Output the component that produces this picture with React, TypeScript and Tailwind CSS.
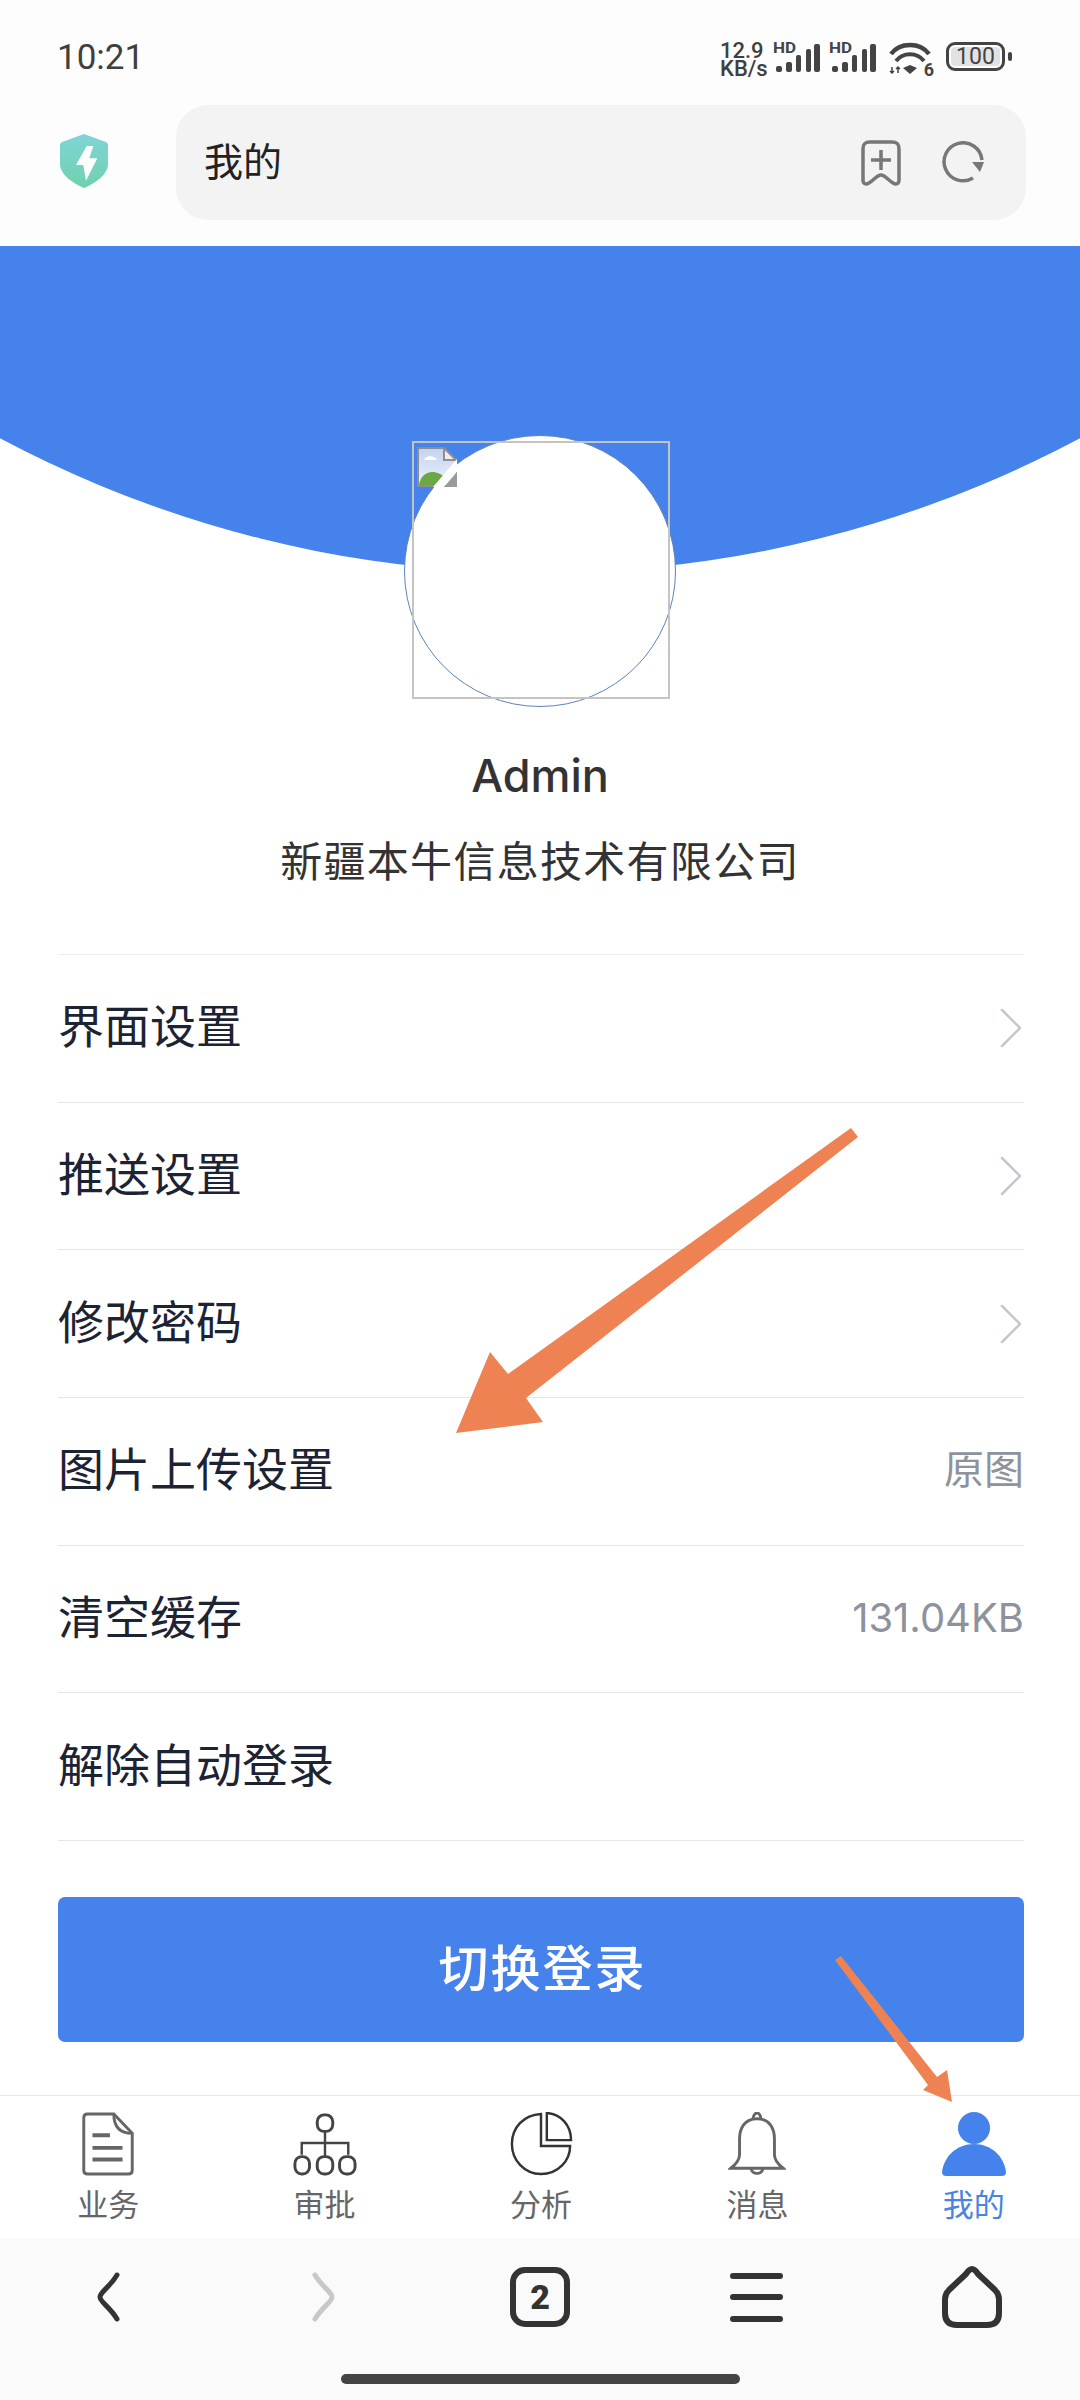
import { ChevronRight } from "lucide-react";

const cjk = "font-['Inter','Noto_Sans_CJK_SC',sans-serif]";

const rows = [
  { label: "界面设置", arrow: true },
  { label: "推送设置", arrow: true },
  { label: "修改密码", arrow: true },
  { label: "图片上传设置", value: "原图" },
  { label: "清空缓存", value: "131.04KB" },
  { label: "解除自动登录" },
];

function Bars() {
  return (
    <div className="relative w-[44px] h-[34px]">
      <span className="absolute left-[-3px] top-[-1px] text-[17px] leading-[14px] font-bold font-['Roboto',sans-serif] text-[#444] scale-y-90 origin-top">
        HD
      </span>
      <svg viewBox="0 0 44 34" className="absolute inset-0 w-[44px] h-[34px]" fill="#444">
        <rect x="0" y="24" width="6" height="6" rx="2" />
        <rect x="10" y="20" width="6" height="10" rx="2" />
        <rect x="20" y="13" width="5" height="17" rx="2" />
        <rect x="30" y="7" width="5" height="23" rx="2" />
        <rect x="38" y="2" width="6" height="28" rx="2" />
      </svg>
    </div>
  );
}

function StatusBar() {
  return (
    <div className="h-[105px] flex items-start justify-between pl-[57px] pr-[75px] pt-[38px] font-['Roboto',sans-serif] text-[#3f3f3f]">
      <span className="text-[35px] leading-[40px]">10:21</span>
      <div className="flex items-start gap-[6px] pt-[4px]">
        <div className="w-[50px] text-[22px] leading-[18px] font-medium">
          12.9
          <br />
          KB/s
        </div>
        <Bars />
        <div className="ml-[6px]">
          <Bars />
        </div>
        <div className="relative w-[44px] h-[34px] ml-[6px]">
          <svg viewBox="0 0 44 34" className="w-[44px] h-[34px]" fill="none" stroke="#444" strokeWidth="4.5">
            <path d="M3 12 C12 0 32 0 41 12" />
            <path d="M8 19 C15 10 29 10 36 19" strokeWidth="4" />
            <path d="M15 26 L22 23 L29 26 L22 32 Z" fill="#444" stroke="none" />
            <path d="M4 25 V31 M2 29 L4 31 L6 29 M10 31 V25 M8 27 L10 25 L12 27" strokeWidth="1.5" />
          </svg>
          <span className="absolute right-[-2px] bottom-[-3px] text-[18px] leading-[18px] font-bold text-[#444]">6</span>
        </div>
        <div className="relative w-[59px] h-[29px] ml-[8px] rounded-[9px] border-[3px] border-[#444] p-[2px]">
          <div className="h-full w-full rounded-[4px] bg-[#e2e2e2] flex items-center justify-center text-[23px] leading-none text-[#444]">
            100
          </div>
          <div className="absolute right-[-10px] top-[7px] w-[4px] h-[9px] rounded-[2px] bg-[#444]" />
        </div>
      </div>
    </div>
  );
}

function AppBar() {
  return (
    <div className="h-[141px] flex items-start pl-[60px] pr-[54px]">
      <svg viewBox="0 0 48 54" className="w-[48px] h-[54px] mt-[29px] shrink-0">
        <defs>
          <linearGradient id="shield" x1="0" y1="0" x2="0" y2="1">
            <stop offset="0" stopColor="#7fd5d6" />
            <stop offset="1" stopColor="#6fd1ae" />
          </linearGradient>
        </defs>
        <path d="M24 0 L46 8 C47 8.5 48 10 48 11 V30 C48 40 36 49 24 54 C12 49 0 40 0 30 V11 C0 10 1 8.5 2 8 Z" fill="url(#shield)" />
        <path d="M26.7 12 L16 31 H23.3 L26 46.7 L37.3 24.3 H29.3 L33.3 12 Z" fill="#fff" />
      </svg>
      <div className="ml-[68px] flex-1 h-[115px] rounded-[32px] bg-[#f3f3f3] flex items-center pl-[28px] pr-[41px]">
        <span className={`${cjk} text-[39px] text-[#222]`}>我的</span>
        <svg viewBox="0 0 40 46" className="ml-auto w-[40px] h-[46px]" fill="none" stroke="#777" strokeWidth="3.5" strokeLinejoin="round">
          <path d="M2 9 C2 4 4 2 9 2 H31 C36 2 38 4 38 9 V40 C38 44 35 45 32 43 C27 40 24 35 20 35 C16 35 13 40 8 43 C5 45 2 44 2 40 Z" />
          <path d="M20 10 V30 M10 20 H30" />
        </svg>
        <svg viewBox="0 0 44 44" className="ml-[40px] w-[44px] h-[44px]" fill="none" stroke="#777" strokeWidth="3.5">
          <path d="M32 37 A19 19 0 1 1 41 19" />
          <path d="M31 21 L43 21 L39 31 Z" fill="#777" stroke="none" />
        </svg>
      </div>
    </div>
  );
}

function BrokenImage() {
  return (
    <svg viewBox="0 0 40 40" className="w-[40px] h-[40px]">
      <defs>
        <linearGradient id="paper" x1="0" y1="0" x2="0" y2="1">
          <stop offset="0" stopColor="#c4d2ee" />
          <stop offset="1" stopColor="#eef2fb" />
        </linearGradient>
      </defs>
      <path d="M1 1 H27 L39 13 V39 H1 Z" fill="url(#paper)" stroke="#8e8e8e" strokeWidth="2" />
      <path d="M27 1 V13 H39 Z" fill="#eee" stroke="#8e8e8e" strokeWidth="2" />
      <path d="M7 13 C9 8 17 8 20 13 Z" fill="#fff" />
      <path d="M2 38 C4 24 18 20 30 32 L24 38 Z" fill="#69a844" />
      <path d="M40 12 L16 40 H27 L40 25 Z" fill="#fff" />
      <path d="M40 25 L27 40 H40 Z" fill="#9a9a9a" />
    </svg>
  );
}

function Profile() {
  return (
    <div className="relative">
      <div className="relative h-[327px] overflow-hidden">
        <div className="absolute left-[-610px] bottom-0 w-[2300px] h-[2300px] rounded-full bg-[#4682eb]" />
      </div>
      <div className="relative z-10 -mt-[138px] h-[272px] w-[272px] mx-auto rounded-full border border-[#5f82b8] bg-white" />
      <div className="absolute z-20 left-[412px] top-[195px] w-[258px] h-[258px] border-2 border-[#c4c4c4] pl-[3px] pt-[4px]">
        <BrokenImage />
      </div>
      <div className={`${cjk} mt-[39px] text-center text-[#333]`}>
        <div className="text-[45px] leading-[60px] font-[550]">Admin</div>
        <div className="mt-[31px] text-[42px] leading-[50px] tracking-[1.3px]">新疆本牛信息技术有限公司</div>
      </div>
    </div>
  );
}

function Menu() {
  return (
    <div className={`${cjk} ml-[58px] mr-[56px] mt-[67px] border-t border-[#ececec]`}>
      {rows.map((r) => (
        <div key={r.label} className="h-[147.7px] border-b border-[#e6e6e6] flex items-center justify-between">
          <span className="pb-[3px] text-[46px] text-[#1c2333]">{r.label}</span>
          {r.arrow && <ChevronRight className="w-[72px] h-[72px] -mr-[23px] text-[#c4c8cf]" strokeWidth={0.85} />}
          {r.value && <span className="pb-[3px] text-[40px] text-[#8d929c]">{r.value}</span>}
        </div>
      ))}
    </div>
  );
}

function TabItem({ label, active, children }: { label: string; active?: boolean; children: React.ReactNode }) {
  return (
    <div className="flex-1 flex flex-col items-center">
      <div className="h-[64px] flex items-end">{children}</div>
      <span className={`mt-[11px] text-[31px] leading-[36px] ${active ? "text-[#4a83e0]" : "text-[#666]"}`}>{label}</span>
    </div>
  );
}

function TabBar() {
  return (
    <div className={`${cjk} h-[143px] border-t border-[#e8e8e8] pt-[16px] flex bg-white -mr-[2px]`}>
      <TabItem label="业务">
        <svg viewBox="0 0 54 66" className="w-[54px] h-[64px]" fill="none" stroke="#666" strokeWidth="3">
          <path d="M6 2 H33 L52 22 V60 C52 63 50 64 48 64 H6 C4 64 2 63 2 60 V6 C2 3 4 2 6 2 Z" />
          <path d="M33 2 C33 14 38 22 52 22" />
          <path d="M11 24 H29 M11 37 H42 M11 49 H42" strokeWidth="4" />
        </svg>
      </TabItem>
      <TabItem label="审批">
        <svg viewBox="0 0 64 66" className="w-[64px] h-[64px]" fill="none" stroke="#444" strokeWidth="3">
          <rect x="24" y="3" width="16" height="17" rx="7" />
          <path d="M32 20 V46 M8 44 V32 H56 V44" strokeWidth="2.5" />
          <rect x="1" y="46" width="15" height="18" rx="7" />
          <rect x="24" y="46" width="16" height="18" rx="7" />
          <rect x="47" y="46" width="16" height="18" rx="7" />
        </svg>
      </TabItem>
      <TabItem label="分析">
        <svg viewBox="0 0 64 66" className="w-[64px] h-[64px]" fill="none" stroke="#333" strokeWidth="2.5">
          <path d="M32 2 C14 3 2 16 2 33 C2 50 15 64 32 64 C50 64 62 50 62 35 H32 Z" />
          <path d="M38 1 V29 H63 C63 13 52 2 38 1 Z" />
        </svg>
      </TabItem>
      <TabItem label="消息">
        <svg viewBox="0 0 58 66" className="w-[58px] h-[64px]" fill="none" stroke="#666" strokeWidth="3">
          <path d="M29 7 C16 7 11 17 11 28 V44 C11 50 7 54 2 58 H56 C51 54 47 50 47 44 V28 C47 17 42 7 29 7 Z" />
          <path d="M25 7 C25 4 27 1 29 1 C31 1 33 4 33 7" />
          <path d="M23 58 C23 65 35 65 35 58" />
        </svg>
      </TabItem>
      <TabItem label="我的" active>
        <svg viewBox="0 0 64 64" className="w-[64px] h-[64px]" fill="#4682eb">
          <circle cx="32" cy="16" r="16" />
          <path d="M0 60 C2 44 15 32 32 32 C49 32 62 44 64 60 C64 63 62 64 60 64 H4 C2 64 0 63 0 60 Z" />
        </svg>
      </TabItem>
    </div>
  );
}

function BrowserBar() {
  return (
    <div className="flex-1 bg-[#fafafa] flex flex-col font-['Roboto',sans-serif]">
      <div className="flex items-center h-[118px]">
        <div className="flex-1 flex justify-center">
          <svg viewBox="0 0 24 50" className="w-[24px] h-[50px]" fill="none" stroke="#333" strokeWidth="5" strokeLinecap="round">
            <path d="M21 3 C14 15 4 20 4 25 C4 30 14 35 21 47" />
          </svg>
        </div>
        <div className="flex-1 flex justify-center">
          <svg viewBox="0 0 24 50" className="w-[24px] h-[50px]" fill="none" stroke="#c8c8c8" strokeWidth="5" strokeLinecap="round">
            <path d="M3 3 C10 15 20 20 20 25 C20 30 10 35 3 47" />
          </svg>
        </div>
        <div className="flex-1 flex justify-center">
          <div className="w-[60px] h-[60px] rounded-[15px] border-[6px] border-[#333] flex items-center justify-center text-[34px] font-black text-[#333]">
            2
          </div>
        </div>
        <div className="flex-1 flex justify-center">
          <div className="w-[53px] h-[49px] flex flex-col justify-between">
            <div className="h-[6px] rounded-full bg-[#333]" />
            <div className="h-[6px] rounded-full bg-[#333]" />
            <div className="h-[6px] rounded-full bg-[#333]" />
          </div>
        </div>
        <div className="flex-1 flex justify-center">
          <svg viewBox="0 0 60 62" className="w-[60px] h-[62px]" fill="none" stroke="#333" strokeWidth="6" strokeLinejoin="round">
            <path d="M30 3 C28 3 26 5 24 8 L7 24 C4 27 3 29 3 33 V47 C3 55 7 59 15 59 H45 C53 59 57 55 57 47 V33 C57 29 56 27 53 24 L36 8 C34 5 32 3 30 3 Z" />
          </svg>
        </div>
      </div>
      <div className="mt-[18px] mx-auto w-[399px] h-[10px] rounded-full bg-[#444]" />
    </div>
  );
}

export default function App() {
  return (
    <div className="relative w-[1080px] h-[2400px] bg-white flex flex-col overflow-hidden">
      <div className="bg-[#fdfdfd]">
        <StatusBar />
        <AppBar />
      </div>
      <Profile />
      <Menu />
      <div className="ml-[58px] mr-[56px] mt-[56px] h-[145px] rounded-[7px] bg-[#4682eb] flex items-center justify-center">
        <span className={`${cjk} pl-[3px] text-[50px] font-medium tracking-[2px] text-white`}>切换登录</span>
      </div>
      <div className="mt-[53px]">
        <TabBar />
      </div>
      <BrowserBar />
      {/* annotation arrows drawn over the screenshot */}
      <svg viewBox="0 0 1080 2400" className="absolute inset-0 w-[1080px] h-[2400px] z-30 pointer-events-none" fill="#ee8252">
        <path d="M851 1128 L858 1137 L526 1398 L543 1422 L456 1433 L490 1352 L508 1374 Z" />
        <path d="M835 1960 L841 1956 L937 2077 L947 2070 L952 2102 L923 2090 L928 2085 Z" />
      </svg>
    </div>
  );
}
